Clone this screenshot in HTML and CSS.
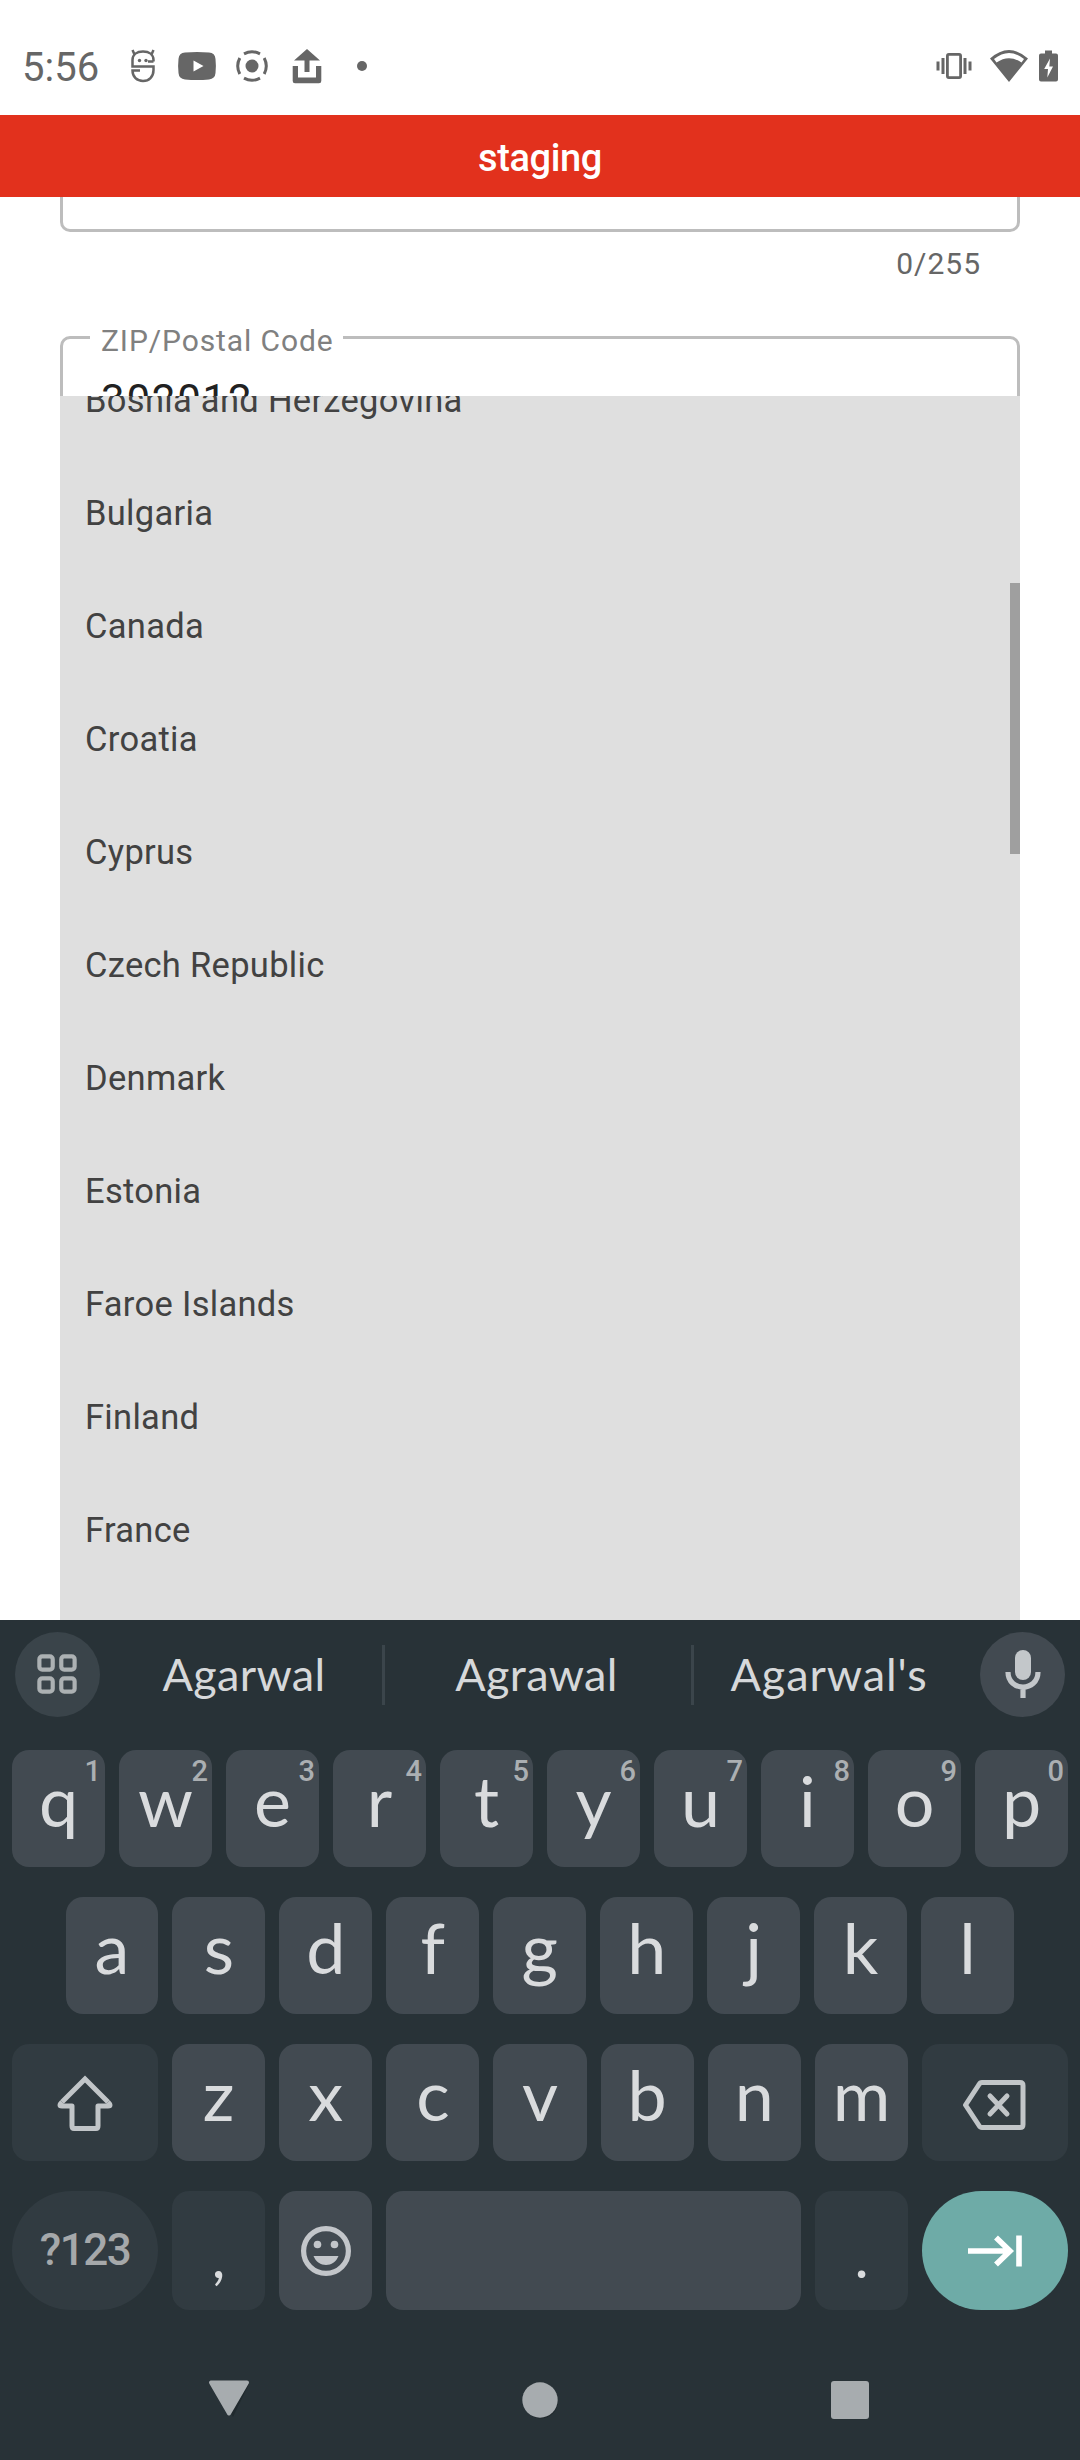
FILE: index.html
```
<!DOCTYPE html>
<html lang="en">
<head>
<meta charset="utf-8">
<title>Address form</title>
<link rel="stylesheet" href="styles.css">
</head>
<body>
<div class="phone">
  <header class="status">
    <span class="clock">5:56</span>
    <svg class="ic-face" width="24" height="34" viewBox="0 0 24 34" fill="none" stroke="#666" stroke-width="2.500">
      <path d="M22.500 12.500V11C22.500 5.500 18 2.500 12 2.500S1.500 5.500 1.500 11V17.500H22.500V21C22.500 28 18 32 12 32S1.500 28 1.500 21.500H9"/>
      <path d="M3.500 5.500L1.500 1M20.500 5.500L22.500 1M17 12.500H22.500"/>
      <circle cx="8.500" cy="11.500" r="1.700" fill="#666" stroke="none"/><circle cx="15" cy="11.500" r="1.700" fill="#666" stroke="none"/>
    </svg>
    <svg class="ic-video" width="38" height="28" viewBox="0 0 38 28"><path fill="#666" fill-rule="evenodd" d="M7 .6Q19-.4 31 .6Q37 1 37.500 7Q38.300 14 37.500 21Q37 27 31 27.400Q19 28.400 7 27.400Q1 27 .5 21Q-.3 14 .5 7Q1 1 7 .6ZM15.500 8.500V19.500L25.500 14Z"/></svg>
    <svg class="ic-record" width="32" height="32" viewBox="0 0 32 32" fill="none" stroke="#666" stroke-width="3">
      <circle cx="16" cy="16" r="6.500" fill="#666" stroke="none"/>
      <path d="M8 3.800Q16-.4 24 3.800M8 28.200Q16 32.400 24 28.200M3.800 8Q-.4 16 3.800 24M28.200 8Q32.400 16 28.200 24"/>
    </svg>
    <svg class="ic-share" width="30" height="35" viewBox="0 0 30 35" fill="#666"><path d="M15 0L28 11.500H17.500V23H12.500V11.500H2Z"/><path d="M.7 17H6V28.500H24V17H29.300V32Q29.300 34.200 27 34.200H3Q.7 34.200 .7 32Z"/></svg>
    <span class="more-dot"></span>
    <svg class="ic-vibrate" width="36" height="26" viewBox="0 0 36 26" fill="#666"><path d="M.5 8.500h3v9h-3zM5.500 5h3v16h-3zM27.500 5h3v16h-3zM32.500 8.500h3v9h-3z"/><rect x="11.400" y="1.400" width="13.200" height="23.200" rx="1.500" fill="none" stroke="#666" stroke-width="2.800"/></svg>
    <svg class="ic-wifi" width="38" height="32" viewBox="0 0 38 32"><path fill="#666" fill-rule="evenodd" d="M0 8.500Q19-8.500 38 8.500L19 32ZM4 9L6.500 12.500Q19 4 31.500 12.500L34 9Q19-3 4 9Z"/></svg>
    <svg class="ic-battery" width="19" height="32" viewBox="0 0 19 32"><path fill="#666" fill-rule="evenodd" d="M6 .5H13V3.500H17Q19 3.500 19 5.500V29.500Q19 31.500 17 31.500H2Q0 31.500 0 29.500V5.500Q0 3.500 2 3.500H6ZM11 8.500L5.200 19H9L8.300 27.500L14 16.500H10.300Z"/></svg>
  </header>
  <div class="banner">staging</div>

  <main class="form">
    <div class="field field-above"></div>
    <div class="counter">0/255</div>
    <div class="field zip">
      <span class="label">ZIP/Postal Code</span>
      <div class="value">302012</div>
    </div>
    <ul class="menu">
      <li>Bosnia and Herzegovina</li>
      <li>Bulgaria</li>
      <li>Canada</li>
      <li>Croatia</li>
      <li>Cyprus</li>
      <li>Czech Republic</li>
      <li>Denmark</li>
      <li>Estonia</li>
      <li>Faroe Islands</li>
      <li>Finland</li>
      <li>France</li>
      <li class="scroll-thumb" aria-hidden="true"></li>
    </ul>
  </main>

  <section class="keyboard">
    <div class="suggest">
      <span class="round grid-btn"><svg width="40" height="40" viewBox="0 0 42 42" fill="none" stroke="#acb1b3" stroke-width="4.400"><rect x="2.500" y="2.500" width="14" height="14" rx="3"/><rect x="25.500" y="2.500" width="14" height="14" rx="3"/><rect x="2.500" y="25.500" width="14" height="14" rx="3"/><rect x="25.500" y="25.500" width="14" height="14" rx="3"/></svg></span>
      <span class="word first">Agarwal</span><i class="sep"></i>
      <span class="word mid">Agrawal</span><i class="sep"></i>
      <span class="word end">Agarwal's</span>
      <span class="round mic"><svg width="36" height="50" viewBox="0 0 36 50"><rect x="10" y="1" width="16" height="30" rx="8" fill="#c3c7ca"/><path d="M3 23C3 43 33 43 33 23M18 38V49" fill="none" stroke="#c3c7ca" stroke-width="5.200"/></svg></span>
    </div>
    <div class="row">
      <span class="key">q<sup>1</sup></span><span class="key">w<sup>2</sup></span><span class="key">e<sup>3</sup></span><span class="key">r<sup>4</sup></span><span class="key">t<sup>5</sup></span><span class="key">y<sup>6</sup></span><span class="key">u<sup>7</sup></span><span class="key">i<sup>8</sup></span><span class="key">o<sup>9</sup></span><span class="key">p<sup>0</sup></span>
    </div>
    <div class="row inset">
      <span class="key">a</span><span class="key">s</span><span class="key">d</span><span class="key">f</span><span class="key">g</span><span class="key">h</span><span class="key">j</span><span class="key">k</span><span class="key">l</span>
    </div>
    <div class="row">
      <span class="key wide dim icon"><svg width="58" height="58" viewBox="0 0 58 58" fill="none" stroke="#c1c5c8" stroke-width="5" stroke-linejoin="round"><path stroke-linejoin="miter" d="M6 28L29 5L52 28"/><path d="M6 28Q2 32 6 32H16V52Q16 54.500 18 54.500H40Q42 54.500 42 52V32H52Q56 32 52 28"/></svg></span>
      <span class="key">z</span><span class="key">x</span><span class="key">c</span><span class="key">v</span><span class="key">b</span><span class="key">n</span><span class="key">m</span>
      <span class="key wide dim icon erase"><svg width="64" height="52" viewBox="0 0 64 52" fill="none" stroke="#c1c5c8" stroke-width="5" stroke-linejoin="round"><path d="M20 3.500H58Q61 3.500 61 6.500V45.500Q61 48.500 58 48.500H20Q18 48.500 17 46.500L3.500 26L17 5.500Q18 3.500 20 3.500Z"/><path stroke-linecap="round" d="M28 17L45 35M45 17L28 35"/></svg></span>
    </div>
    <div class="row last">
      <span class="key wide dim pill sym">?123</span>
      <span class="key dim punct">,</span>
      <span class="key icon emoji"><svg width="52" height="52" viewBox="0 0 52 52"><circle cx="26" cy="26" r="22.400" fill="none" stroke="#c3c6ca" stroke-width="5.200"/><circle cx="17.500" cy="19.500" r="3.800" fill="#c3c6ca"/><circle cx="34.500" cy="19.500" r="3.800" fill="#c3c6ca"/><path d="M13.500 31H38.500C34 43 18 43 13.500 31Z" fill="#c3c6ca"/></svg></span>
      <span class="key space"></span>
      <span class="key dim punct">.</span>
      <span class="key wide pill enter icon"><svg width="54" height="32" viewBox="0 0 54 32" fill="none" stroke="#fff" stroke-width="5.600"><path d="M0 16H42M28 2.500L42 16L28 29.500M51 .5V31.500"/></svg></span>
    </div>
    <nav class="nav">
      <svg width="44" height="40" viewBox="0 0 44 40"><path class="nav-shade" d="M5 4H41L25 37Z"/><path class="nav-shape" d="M3 2.500H39L21 33.500Z"/></svg>
      <svg width="44" height="40" viewBox="0 0 44 40"><circle class="nav-shade" cx="23" cy="21.500" r="17"/><circle class="nav-shape round-shape" cx="22" cy="20" r="17.700"/></svg>
      <svg width="44" height="40" viewBox="0 0 44 40"><rect class="nav-shape round-shape" x="3" y="1" width="38" height="38" rx="3"/></svg>
    </nav>
  </section>
</div>
</body>
</html>
```
FILE: styles.css
```
* { box-sizing: border-box; }
body { margin: 0; background: #fff; font-family: Roboto, sans-serif; }
svg { display: block; flex: none; overflow: visible; }
.phone { width: 1080px; height: 2460px; display: flex; flex-direction: column; overflow: hidden; }

.status { height: 115px; padding: 17px 22px 0 22px; display: flex; align-items: center; color: #666; flex: none; }
.clock { width: 79px; padding-top: 3px; font-size: 40px; line-height: 48px; font-weight: 450; }
.ic-face { margin-left: 30px; }
.ic-video { margin-left: 23px; }
.ic-record { margin-left: 20px; }
.ic-share { margin-left: 24px; }
.more-dot { width: 10px; height: 10px; border-radius: 50%; background: #666; margin-left: 35px; }
.ic-vibrate { margin-left: auto; }
.ic-wifi { margin-left: 18px; }
.ic-battery { margin-left: 11px; }

.banner { height: 82px; flex: none; background: #e2311d; color: #fff; text-align: center; font-size: 38px; line-height: 86px; font-weight: 500; letter-spacing: -.4px; }

.form { position: relative; height: 1423px; flex: none; padding: 0 60px; overflow: hidden; }
.field { border: 3px solid #bdbdbd; border-radius: 10px; }
.field-above { height: 35px; border-top: 0; border-top-left-radius: 0; border-top-right-radius: 0; }
.counter { margin: 14px 39px 0 0; height: 36px; line-height: 36px; font-size: 30px; letter-spacing: 1px; text-align: right; color: #666; }
.zip { margin-top: 54px; height: 140px; padding-left: 27px; }
.label { display: block; width: 253px; height: 36px; margin-top: -17px; padding-left: 11px; background: #fff; font-size: 30px; line-height: 37px; letter-spacing: .9px; color: #808080; white-space: nowrap; }
.value { margin: 17px 0 0 11px; font-size: 42px; line-height: 50px; letter-spacing: 1.800px; color: #212121; }

.menu { position: absolute; left: 60px; top: 199px; width: 960px; bottom: 0; margin: 0; padding: 0; overflow: hidden; list-style: none; background: #dfdfdf; }
.menu li { height: 113px; padding-left: 25px; font-size: 34.500px; line-height: 113px; letter-spacing: .3px; color: #424242; }
.menu li:first-child { margin-top: -52.500px; }
.menu .scroll-thumb { position: absolute; right: 0; top: 187px; width: 10px; height: 271px; padding: 0; background: #9f9f9f; }

.keyboard { height: 840px; flex: none; background: #283237; padding: 12px 12px 0; color: #d9dbdd; font-family: Lato, sans-serif; }
.suggest { display: flex; align-items: center; height: 85px; margin: 0 3px 33px; }
.round { width: 85px; height: 85px; border-radius: 50%; background: #3a444a; display: flex; align-items: center; justify-content: center; flex: none; }
.mic { background: #424a51; }
.round svg { margin-bottom: 2px; }
.grid-btn svg { margin-right: 2px; }
.word { flex: none; text-align: center; font-size: 45px; line-height: 85px; letter-spacing: .3px; color: #d6d8da; }
.first { width: 282px; padding-left: 6px; }
.mid { width: 306px; padding-right: 3px; }
.end { width: 286px; padding-right: 16px; letter-spacing: .9px; }
.sep { width: 3px; height: 60px; background: #3b454b; flex: none; }

.row { display: flex; gap: 14px; height: 117px; margin-bottom: 30px; }
.inset { padding: 0 54px 0 53.500px; }
.last { height: 119px; margin-bottom: 0; }
.key { position: relative; flex: 1 1 0; border-radius: 17px; background: #424a51; text-align: center; font-size: 70px; line-height: 100px; }
.key sup { position: absolute; top: 4px; right: 4px; font: 500 29px/34px Roboto, sans-serif; color: #abafb2; }
.wide { flex: 0 0 146px; }
.dim { background: #313b41; }
.icon { display: flex; align-items: center; justify-content: center; }
.erase { padding: 4px 2px 0 0; }
.pill { border-radius: 60px; }
.sym { font: 500 44px/118px Roboto, sans-serif; letter-spacing: -1.500px; color: #a5a8aa; }
.punct { font-size: 60px; line-height: 128px; flex: 0 0 93px; }
.emoji { flex: 0 0 93px; }
.enter { background: #6eaba7; }

.nav { display: flex; justify-content: space-between; padding: 70px 196px 0; }
.nav-shape { fill: #a7acaf; stroke: #a7acaf; stroke-width: 4px; stroke-linejoin: round; }
.round-shape { stroke: none; }
.nav-shade { fill: #20292d; }
```
